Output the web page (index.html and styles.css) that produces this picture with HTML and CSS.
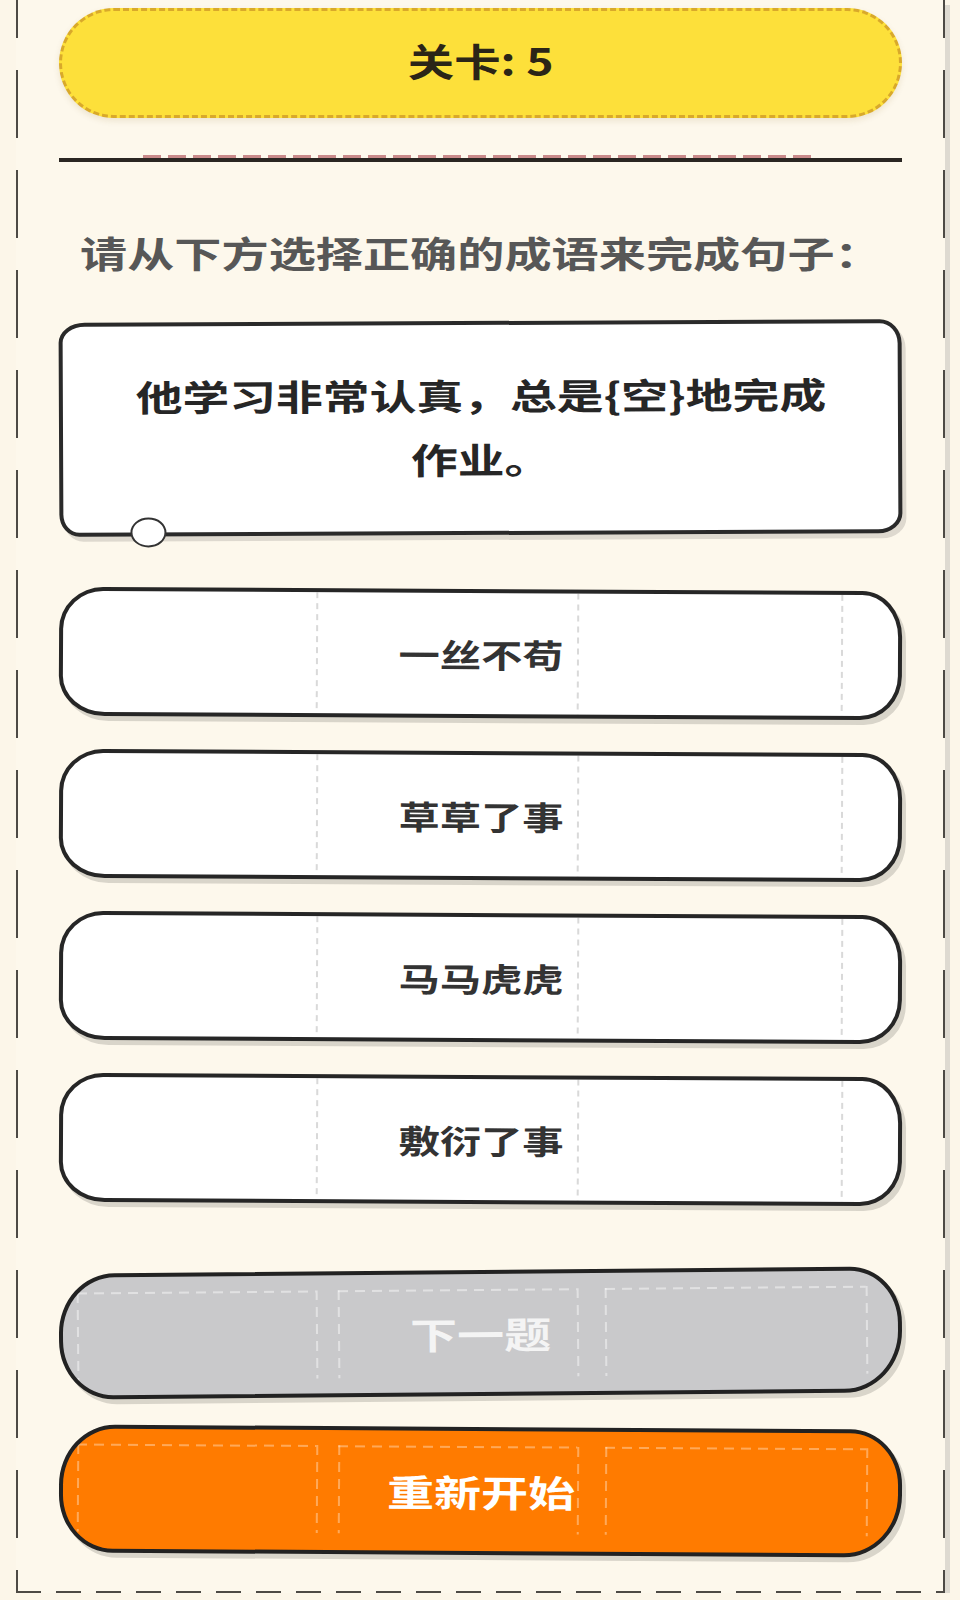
FILE: index.html
```html
<!DOCTYPE html>
<html lang="zh">
<head>
<meta charset="utf-8">
<title>成语填空</title>
<link rel="stylesheet" href="styles.css">
</head>
<body>
<div class="frame">
  <div class="level"><span class="txt">关卡: 5</span></div>
  <div class="divider"></div>
  <p class="prompt"><span class="txt">请从下方选择正确的成语来完成句子：</span></p>
  <div class="card">
    <p class="sentence"><span class="txt">他学习非常认真，总是{空}地完成作业。</span></p>
    <span class="tail"></span>
  </div>
  <div class="options">
    <button class="opt"><span class="txt">一丝不苟</span></button>
    <button class="opt"><span class="txt">草草了事</span></button>
    <button class="opt"><span class="txt">马马虎虎</span></button>
    <button class="opt"><span class="txt">敷衍了事</span></button>
  </div>
  <button class="btn next"><span class="txt">下一题</span></button>
  <button class="btn restart"><span class="txt">重新开始</span></button>
</div>
</body>
</html>
```
FILE: styles.css
```css
* { box-sizing: border-box; }

body {
  margin: 0;
  background: #fcf6e9;
  font-family: "Noto Sans CJK SC", "Noto Sans", sans-serif;
}

.frame {
  margin-left: 16px;
  width: 929px;
  height: 1593px;
  padding: 8px 43px 0;
  background:
    linear-gradient(#4d4a45 68%, transparent 0) left -30px / 2px 100px repeat-y,
    linear-gradient(#4d4a45 68%, transparent 0) right -30px / 2px 100px repeat-y,
    linear-gradient(to right, #4d4a45 62%, transparent 0) 0 100% / 40px 2px repeat-x,
    #fdf8ec;
  box-shadow: 5px 5px 0 #dedad1;
}

.txt {
  display: inline-block;
  white-space: nowrap;
}

.level {
  height: 110px;
  border: 3px dashed #d9a92a;
  border-radius: 55px;
  background: #fde03a;
  display: flex;
  align-items: center;
  justify-content: center;
  padding-bottom: 6px;
  box-shadow: 0 3px 6px rgba(120, 90, 0, 0.12);
}
.level .txt {
  font-size: 38px;
  font-weight: 700;
  line-height: 1;
  color: #2b2517;
  transform: scaleX(1.22);
}

.divider {
  margin-top: 37px;
  height: 7px;
  background:
    repeating-linear-gradient(to right, #c98a8a 0 18px, transparent 18px 25px) 84px 0 / 674px 3px no-repeat,
    linear-gradient(#2a2622, #2a2622) 0 100% / 100% 4px no-repeat;
}

.prompt {
  margin: 66px 0 0;
  padding-left: 21px;
  line-height: 48px;
  font-size: 36px;
  font-weight: 700;
  color: #575757;
}
.prompt .txt {
  transform-origin: left center;
  transform: scaleX(1.31);
}

.card {
  position: relative;
  margin-top: 45px;
  border: 4px solid #2a2a2a;
  border-radius: 26px 22px 24px 20px / 20px 24px 20px 22px;
  background: #fff;
  padding: 37px 20px 41px;
  text-align: center;
  box-shadow: 4px 5px 0 rgba(0, 0, 0, 0.12);
  transform: rotate(-0.25deg);
}
.sentence {
  margin: 0;
  font-size: 36px;
  font-weight: 700;
  line-height: 64px;
  color: #262626;
}
.sentence .txt {
  width: 540px;
  white-space: normal;
  transform: scaleX(1.3);
}
.tail {
  position: absolute;
  left: 67px;
  bottom: -15px;
  width: 36px;
  height: 30px;
  border: 2.5px solid #333;
  border-radius: 50%;
  background: #fff;
}

button {
  font: inherit;
  margin: 0;
  padding: 0;
  width: 100%;
  display: flex;
  align-items: center;
  justify-content: center;
  cursor: pointer;
}

.options {
  margin-top: 54px;
  display: flex;
  flex-direction: column;
  gap: 33px;
}

.opt {
  height: 129px;
  border: 4px solid #262626;
  border-radius: 44px 40px 42px 46px / 42px 46px 44px 40px;
  background:
    linear-gradient(#d9d9d9 55%, transparent 0) 253px 0 / 2px 11px repeat-y,
    linear-gradient(#d9d9d9 55%, transparent 0) 514px 0 / 2px 11px repeat-y,
    linear-gradient(#d9d9d9 55%, transparent 0) 778px 0 / 2px 11px repeat-y,
    #fff;
  box-shadow: 4px 5px 0 rgba(0, 0, 0, 0.14);
  transform: rotate(0.3deg);
}
.opt .txt {
  font-size: 33px;
  font-weight: 700;
  color: #333;
  transform: scaleX(1.25);
}

.btn {
  --d: rgba(255, 255, 255, 0.45);
  border: 4px solid #222;
  border-radius: 56px 52px 58px 54px / 60px 56px 62px 58px;
  box-shadow: 4px 5px 0 rgba(0, 0, 0, 0.14);
  background:
    repeating-linear-gradient(to right, var(--d) 0 10px, transparent 10px 17px) 14px 15px / 239px 2px no-repeat,
    repeating-linear-gradient(to right, var(--d) 0 10px, transparent 10px 17px) 275px 15px / 239px 2px no-repeat,
    repeating-linear-gradient(to right, var(--d) 0 10px, transparent 10px 17px) 542px 15px / 261px 2px no-repeat,
    repeating-linear-gradient(var(--d) 0 10px, transparent 10px 17px) 14px 15px / 2px 88px no-repeat,
    repeating-linear-gradient(var(--d) 0 10px, transparent 10px 17px) 253px 15px / 2px 88px no-repeat,
    repeating-linear-gradient(var(--d) 0 10px, transparent 10px 17px) 275px 15px / 2px 88px no-repeat,
    repeating-linear-gradient(var(--d) 0 10px, transparent 10px 17px) 514px 15px / 2px 88px no-repeat,
    repeating-linear-gradient(var(--d) 0 10px, transparent 10px 17px) 542px 15px / 2px 88px no-repeat,
    repeating-linear-gradient(var(--d) 0 10px, transparent 10px 17px) 803px 15px / 2px 88px no-repeat,
    var(--bg);
}
.btn .txt {
  font-size: 37px;
  font-weight: 700;
  color: #fff;
  transform: scaleX(1.27);
}

.next {
  --bg: #c9c9cb;
  margin-top: 66px;
  height: 126px;
  transform: rotate(-0.5deg);
}
.next .txt { color: #f4f4f4; }

.restart {
  --bg: #ff7b00;
  --d: rgba(255, 255, 255, 0.35);
  margin-top: 31px;
  height: 128px;
  transform: rotate(0.35deg);
}
```
